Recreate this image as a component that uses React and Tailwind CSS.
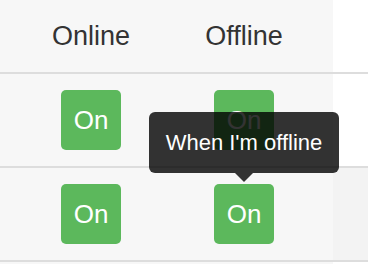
const OnButton = () => (
  <div className="w-[60px] h-[60px] rounded-[5px] bg-[#5cb85c] flex items-center justify-center text-white text-[26px] leading-none">
    On
  </div>
);

const Row = ({ children, right = 'bg-white', height = 'h-[92px]' }) => (
  <div className={`flex ${height}`}>
    <div className="w-[333px] bg-[#f7f7f7] flex items-center pl-[61px] gap-[93px]">
      {children}
    </div>
    <div className={`flex-1 ${right}`}></div>
  </div>
);

const Cell = ({ children }) => (
  <div className="w-[60px] flex justify-center whitespace-nowrap">{children}</div>
);

function App() {
  return (
    <div
      className="relative w-[368px] h-[264px] overflow-hidden bg-white text-[#333]"
      style={{ fontFamily: '"Liberation Sans", Arial, sans-serif' }}
    >
      <Row height="h-[72px]">
        <Cell><span className="text-[27px]">Online</span></Cell>
        <Cell><span className="text-[27px]">Offline</span></Cell>
      </Row>
      <div className="h-[2px] bg-[#ddd]"></div>
      <Row>
        <Cell><OnButton /></Cell>
        <Cell><OnButton /></Cell>
      </Row>
      <div className="h-[2px] bg-[#ddd]"></div>
      <Row right="bg-[#f3f3f3]">
        <Cell><OnButton /></Cell>
        <Cell><OnButton /></Cell>
      </Row>
      <div className="h-[2px] bg-[#ddd]"></div>
      <Row height="h-[2px]" />

      <div className="absolute left-[149px] top-[112px] w-[190px]">
        <div className="h-[61px] rounded-[6px] bg-black/80 flex items-center justify-center text-white text-[22px]">
          When I'm offline
        </div>
        <div className="mx-auto w-0 h-0 border-x-[9px] border-x-transparent border-t-[9px] border-t-black/80"></div>
      </div>
    </div>
  );
}

export default App;
